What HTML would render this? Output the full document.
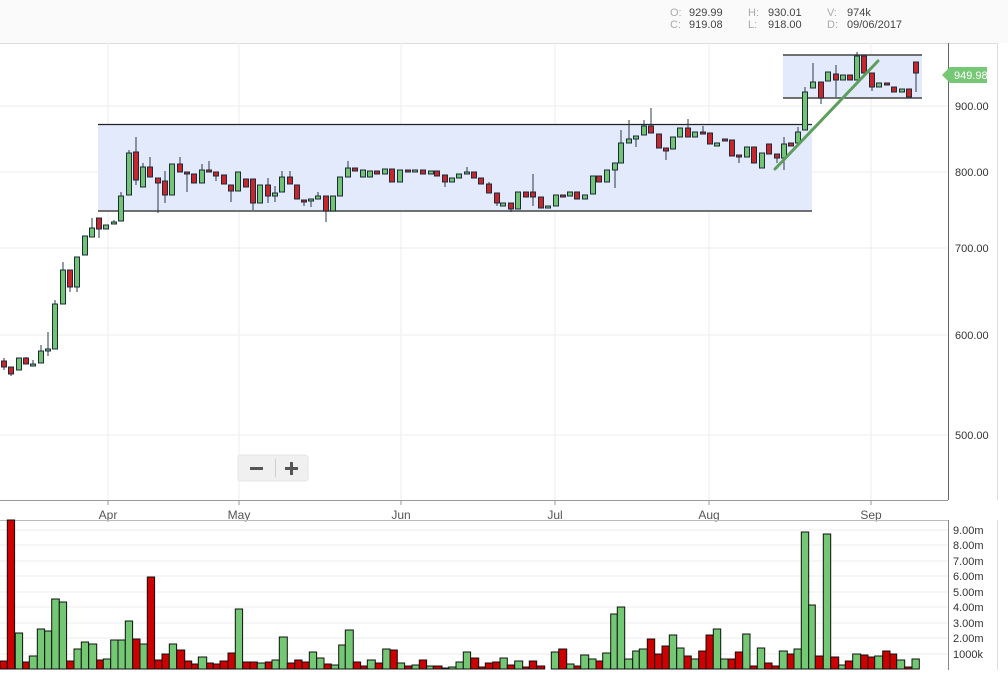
<!DOCTYPE html>
<html><head><meta charset="utf-8"><style>
html,body{margin:0;padding:0;background:#fff;width:1008px;height:673px;overflow:hidden;font-family:"Liberation Sans",Arial,sans-serif}
.hdr{position:absolute;left:0;top:0;width:1008px;height:43px;background:#fafafa}
.t{position:absolute;font-size:11px;color:#444}
.l{color:#aaa}
svg{position:absolute;left:0;top:0}
.g{fill:#72c472;stroke:#1c2b3a;stroke-width:1}
.r{fill:#c8262b;stroke:#1c2b3a;stroke-width:1}
.vg{fill:#74c874;stroke:#111;stroke-width:1}
.vr{fill:#cc0000;stroke:#111;stroke-width:1}
.w line{stroke:#2a3a4a;stroke-width:1}
.ax{font-size:11px;fill:#333}
.mo{font-size:12px;fill:#555}
</style></head><body>
<div class="hdr"></div>
<div class="t l" style="left:670px;top:7px">O:</div><div class="t" style="left:689px;top:7px">929.99</div>
<div class="t l" style="left:670px;top:19px">C:</div><div class="t" style="left:689px;top:19px">919.08</div>
<div class="t l" style="left:748px;top:7px">H:</div><div class="t" style="left:768px;top:7px">930.01</div>
<div class="t l" style="left:748px;top:19px">L:</div><div class="t" style="left:768px;top:19px">918.00</div>
<div class="t l" style="left:827px;top:7px">V:</div><div class="t" style="left:847px;top:7px">974k</div>
<div class="t l" style="left:827px;top:19px">D:</div><div class="t" style="left:847px;top:19px">09/06/2017</div>
<svg width="1008" height="673" viewBox="0 0 1008 673">
<!-- frames -->
<line x1="0" y1="43.5" x2="998" y2="43.5" stroke="#ddd"/>
<line x1="997.5" y1="43" x2="997.5" y2="500" stroke="#ddd"/>
<g stroke="#eee" stroke-width="1">
<line x1="0" y1="106" x2="948" y2="106"/><line x1="0" y1="172" x2="948" y2="172"/>
<line x1="0" y1="248" x2="948" y2="248"/><line x1="0" y1="335" x2="948" y2="335"/>
<line x1="0" y1="435" x2="948" y2="435"/>
<line x1="108" y1="43" x2="108" y2="500"/><line x1="239" y1="43" x2="239" y2="500"/>
<line x1="401" y1="43" x2="401" y2="500"/><line x1="555" y1="43" x2="555" y2="500"/>
<line x1="709" y1="43" x2="709" y2="500"/><line x1="871" y1="43" x2="871" y2="500"/>
<line x1="0" y1="530" x2="948" y2="530"/><line x1="0" y1="545" x2="948" y2="545"/>
<line x1="0" y1="561" x2="948" y2="561"/><line x1="0" y1="576" x2="948" y2="576"/>
<line x1="0" y1="592" x2="948" y2="592"/><line x1="0" y1="607" x2="948" y2="607"/>
<line x1="0" y1="623" x2="948" y2="623"/><line x1="0" y1="638" x2="948" y2="638"/>
<line x1="0" y1="654" x2="948" y2="654"/>
</g>
<!-- rectangles -->
<rect x="98" y="124" width="714" height="87" fill="#e3eafc"/>
<line x1="98" y1="124.5" x2="812" y2="124.5" stroke="#222" stroke-width="1.3"/>
<line x1="98" y1="211" x2="812" y2="211" stroke="#444" stroke-width="1.5"/>
<rect x="783" y="55" width="139" height="43" fill="#e3eafc"/>
<line x1="783" y1="55" x2="922" y2="55" stroke="#444" stroke-width="1.5"/>
<line x1="783" y1="98" x2="922" y2="98" stroke="#444" stroke-width="1.5"/>
<!-- axes -->
<line x1="948.5" y1="43" x2="948.5" y2="500" stroke="#666"/>
<line x1="0" y1="500.5" x2="948" y2="500.5" stroke="#999"/>
<g stroke="#999"><line x1="108" y1="500" x2="108" y2="505"/><line x1="239" y1="500" x2="239" y2="505"/><line x1="401" y1="500" x2="401" y2="505"/><line x1="555" y1="500" x2="555" y2="505"/><line x1="709" y1="500" x2="709" y2="505"/><line x1="871" y1="500" x2="871" y2="505"/></g>
<g class="mo" text-anchor="middle"><text x="108" y="519">Apr</text><text x="239" y="519">May</text><text x="401" y="519">Jun</text><text x="555" y="519">Jul</text><text x="709" y="519">Aug</text><text x="871" y="519">Sep</text></g>
<g class="ax"><text x="955" y="110">900.00</text><text x="955" y="176">800.00</text><text x="955" y="252">700.00</text><text x="955" y="339">600.00</text><text x="955" y="439">500.00</text></g>
<line x1="0" y1="520.5" x2="948" y2="520.5" stroke="#bbb"/>
<line x1="948.5" y1="520" x2="948.5" y2="670" stroke="#888"/>
<line x1="997.5" y1="520" x2="997.5" y2="670" stroke="#ddd"/>
<g class="ax" font-size="10.5"><text x="953" y="534">9.00m</text><text x="953" y="549">8.00m</text><text x="953" y="565">7.00m</text><text x="953" y="580">6.00m</text><text x="953" y="596">5.00m</text><text x="953" y="611">4.00m</text><text x="953" y="627">3.00m</text><text x="953" y="642">2.00m</text><text x="953" y="658">1000k</text></g>
<!-- candles -->
<g class="w">
<line x1="4" y1="358" x2="4" y2="370"/><line x1="11" y1="367" x2="11" y2="376"/><line x1="26" y1="357" x2="26" y2="364"/><line x1="33" y1="360" x2="33" y2="366"/><line x1="41" y1="345" x2="41" y2="363"/><line x1="48" y1="332" x2="48" y2="356"/><line x1="55" y1="300" x2="55" y2="349"/><line x1="63" y1="262" x2="63" y2="304"/><line x1="70" y1="270" x2="70" y2="292"/><line x1="77" y1="257" x2="77" y2="292"/><line x1="92" y1="218" x2="92" y2="237"/><line x1="99" y1="218" x2="99" y2="238"/><line x1="114" y1="220" x2="114" y2="224"/><line x1="121" y1="192" x2="121" y2="221"/><line x1="129" y1="150" x2="129" y2="195"/><line x1="136" y1="137" x2="136" y2="185"/><line x1="143" y1="163" x2="143" y2="187"/><line x1="150" y1="157" x2="150" y2="177"/><line x1="158" y1="178" x2="158" y2="213"/><line x1="165" y1="171" x2="165" y2="203"/><line x1="180" y1="157" x2="180" y2="172"/><line x1="187" y1="172" x2="187" y2="192"/><line x1="202" y1="164" x2="202" y2="183"/><line x1="209" y1="161" x2="209" y2="172"/><line x1="216" y1="172" x2="216" y2="181"/><line x1="231" y1="185" x2="231" y2="202"/><line x1="253" y1="179" x2="253" y2="210"/><line x1="268" y1="178" x2="268" y2="203"/><line x1="275" y1="186" x2="275" y2="202"/><line x1="282" y1="171" x2="282" y2="192"/><line x1="290" y1="171" x2="290" y2="184"/><line x1="304" y1="200" x2="304" y2="206"/><line x1="311" y1="199" x2="311" y2="207"/><line x1="318" y1="192" x2="318" y2="199"/><line x1="326" y1="196" x2="326" y2="222"/><line x1="348" y1="161" x2="348" y2="177"/>
<line x1="445" y1="175" x2="445" y2="187"/><line x1="467" y1="167" x2="467" y2="174"/><line x1="489" y1="182" x2="489" y2="193"/><line x1="497" y1="193" x2="497" y2="206"/><line x1="511" y1="203" x2="511" y2="212"/><line x1="533" y1="174" x2="533" y2="206"/><line x1="615" y1="163" x2="615" y2="188"/><line x1="621" y1="130" x2="621" y2="163"/><line x1="629" y1="120" x2="629" y2="143"/><line x1="636" y1="136" x2="636" y2="147"/><line x1="644" y1="120" x2="644" y2="135"/><line x1="651" y1="108" x2="651" y2="133"/><line x1="666" y1="148" x2="666" y2="160"/><line x1="688" y1="119" x2="688" y2="137"/><line x1="703" y1="126" x2="703" y2="134"/><line x1="739" y1="155" x2="739" y2="163"/><line x1="777" y1="154" x2="777" y2="163"/><line x1="784" y1="137" x2="784" y2="170"/><line x1="798" y1="127" x2="798" y2="143"/><line x1="805" y1="87" x2="805" y2="130"/><line x1="813" y1="63" x2="813" y2="88"/><line x1="821" y1="82" x2="821" y2="104"/><line x1="836" y1="65" x2="836" y2="97"/><line x1="857" y1="52" x2="857" y2="80"/><line x1="872" y1="73" x2="872" y2="91"/><line x1="916" y1="62" x2="916" y2="92"/>
</g>
<g>
<rect class="r" x="1.5" y="361" width="5" height="6"/><rect class="r" x="8.5" y="367" width="5" height="7"/><rect class="g" x="16.5" y="358" width="5" height="12"/><rect class="r" x="23.5" y="358" width="5" height="6"/><rect class="g" x="30.5" y="364" width="5" height="2"/><rect class="g" x="38.5" y="351" width="5" height="12"/><rect class="g" x="45.5" y="349" width="5" height="2"/><rect class="g" x="52.5" y="304" width="5" height="45"/><rect class="g" x="60.5" y="270" width="5" height="34"/><rect class="r" x="67.5" y="270" width="5" height="17"/><rect class="g" x="74.5" y="257" width="5" height="30"/><rect class="g" x="82.5" y="236" width="5" height="19"/><rect class="g" x="89.5" y="228" width="5" height="9"/><rect class="r" x="96.5" y="218" width="5" height="11"/><rect class="g" x="103.5" y="225" width="5" height="4"/><rect class="g" x="111.5" y="222" width="5" height="2"/><rect class="g" x="118.5" y="196" width="5" height="25"/><rect class="g" x="126.5" y="153" width="5" height="42"/><rect class="r" x="133.5" y="152" width="5" height="28"/><rect class="g" x="140.5" y="167" width="5" height="20"/><rect class="r" x="147.5" y="167" width="5" height="10"/><rect class="r" x="155.5" y="178" width="5" height="5"/><rect class="r" x="162.5" y="181" width="5" height="14"/><rect class="g" x="169.5" y="164" width="5" height="31"/><rect class="r" x="177.5" y="164" width="5" height="8"/><rect class="r" x="184.5" y="172" width="5" height="2"/><rect class="r" x="191.5" y="174" width="5" height="9"/><rect class="g" x="199.5" y="170" width="5" height="13"/><rect class="r" x="206.5" y="170" width="5" height="2"/><rect class="r" x="213.5" y="172" width="5" height="4"/><rect class="r" x="221.5" y="175" width="5" height="9"/><rect class="r" x="228.5" y="185" width="5" height="6"/><rect class="g" x="235.5" y="172" width="5" height="19"/><rect class="r" x="243.5" y="179" width="5" height="8"/><rect class="r" x="250.5" y="179" width="5" height="24"/><rect class="g" x="257.5" y="185" width="5" height="18"/><rect class="r" x="265.5" y="185" width="5" height="11"/><rect class="g" x="272.5" y="193" width="5" height="3"/><rect class="g" x="279.5" y="177" width="5" height="15"/><rect class="r" x="287.5" y="177" width="5" height="7"/><rect class="r" x="294.5" y="185" width="5" height="14"/><rect class="r" x="301.5" y="200" width="5" height="2"/><rect class="g" x="308.5" y="199" width="5" height="2"/><rect class="g" x="315.5" y="196" width="5" height="3"/><rect class="r" x="323.5" y="196" width="5" height="15"/><rect class="g" x="330.5" y="196" width="5" height="15"/><rect class="g" x="337.5" y="177" width="5" height="19"/><rect class="g" x="345.5" y="168" width="5" height="9"/><rect class="r" x="352.5" y="168" width="5" height="3"/><rect class="g" x="360.5" y="170" width="5" height="7"/><rect class="g" x="367.5" y="171" width="5" height="6"/><rect class="r" x="374.5" y="171" width="5" height="3"/><rect class="g" x="382.5" y="169" width="5" height="5"/><rect class="r" x="389.5" y="169" width="5" height="13"/>
<rect class="g" x="397.5" y="170" width="5" height="12"/><rect class="r" x="405.5" y="170" width="5" height="2"/><rect class="g" x="412.5" y="170" width="5" height="2"/><rect class="r" x="420.5" y="170" width="5" height="4"/><rect class="g" x="428.5" y="171" width="5" height="3"/><rect class="r" x="434.5" y="171" width="5" height="5"/><rect class="r" x="442.5" y="175" width="5" height="7"/><rect class="g" x="449.5" y="178" width="5" height="4"/><rect class="g" x="456.5" y="174" width="5" height="4"/><rect class="g" x="464.5" y="172" width="5" height="2"/><rect class="r" x="471.5" y="172" width="5" height="6"/><rect class="r" x="478.5" y="178" width="5" height="6"/><rect class="r" x="486.5" y="184" width="5" height="9"/><rect class="r" x="494.5" y="193" width="5" height="10"/><rect class="g" x="500.5" y="203" width="5" height="3"/><rect class="r" x="508.5" y="203" width="5" height="6"/><rect class="g" x="515.5" y="192" width="5" height="17"/><rect class="r" x="523.5" y="192" width="5" height="5"/><rect class="r" x="530.5" y="192" width="5" height="5"/><rect class="r" x="538.5" y="197" width="5" height="11"/><rect class="g" x="545.5" y="206" width="5" height="2"/><rect class="g" x="553.5" y="195" width="5" height="11"/><rect class="r" x="560.5" y="195" width="5" height="2"/><rect class="g" x="567.5" y="192" width="5" height="4"/><rect class="r" x="574.5" y="192" width="5" height="7"/><rect class="g" x="582.5" y="195" width="5" height="4"/><rect class="g" x="590.5" y="176" width="5" height="18"/><rect class="r" x="596.5" y="176" width="5" height="6"/><rect class="g" x="604.5" y="170" width="5" height="12"/><rect class="g" x="612.5" y="163" width="5" height="7"/><rect class="g" x="618.5" y="143" width="5" height="20"/><rect class="g" x="626.5" y="139" width="5" height="4"/><rect class="g" x="633.5" y="136" width="5" height="3"/><rect class="g" x="641.5" y="126" width="5" height="9"/><rect class="r" x="648.5" y="126" width="5" height="7"/><rect class="r" x="656.5" y="134" width="5" height="14"/><rect class="r" x="663.5" y="148" width="5" height="3"/><rect class="g" x="670.5" y="137" width="5" height="12"/><rect class="g" x="677.5" y="128" width="5" height="9"/><rect class="r" x="685.5" y="128" width="5" height="9"/><rect class="g" x="692.5" y="132" width="5" height="5"/><rect class="r" x="700.5" y="132" width="5" height="2"/><rect class="r" x="707.5" y="133" width="5" height="11"/><rect class="g" x="714.5" y="143" width="5" height="3"/><rect class="r" x="722.5" y="139" width="5" height="2"/><rect class="r" x="729.5" y="140" width="5" height="16"/><rect class="r" x="736.5" y="155" width="5" height="2"/><rect class="g" x="744.5" y="147" width="5" height="10"/><rect class="r" x="751.5" y="147" width="5" height="16"/><rect class="g" x="759.5" y="153" width="5" height="15"/><rect class="r" x="766.5" y="144" width="5" height="10"/><rect class="r" x="774.5" y="154" width="5" height="4"/><rect class="g" x="781.5" y="144" width="5" height="14"/><rect class="r" x="788.5" y="143" width="5" height="3"/><rect class="g" x="795.5" y="132" width="5" height="11"/><rect class="g" x="802.5" y="92" width="5" height="38"/><rect class="g" x="810.5" y="82" width="5" height="6"/><rect class="r" x="818.5" y="82" width="5" height="16"/><rect class="g" x="825.5" y="72" width="5" height="9"/><rect class="r" x="833.5" y="74" width="5" height="6"/><rect class="g" x="840.5" y="75" width="5" height="5"/><rect class="r" x="847.5" y="75" width="5" height="5"/><rect class="g" x="854.5" y="56" width="5" height="24"/><rect class="r" x="861.5" y="56" width="5" height="17"/><rect class="r" x="869.5" y="73" width="5" height="14"/><rect class="g" x="876.5" y="83" width="5" height="4"/><rect class="r" x="884.5" y="83" width="5" height="2"/><rect class="r" x="891.5" y="87" width="5" height="5"/><rect class="g" x="899.5" y="89" width="5" height="3"/><rect class="r" x="906.5" y="89" width="5" height="8"/><rect class="r" x="913.5" y="62" width="5" height="11"/>
</g>
<line x1="775" y1="169" x2="878" y2="61" stroke="#5d9e5d" stroke-width="3" stroke-linecap="round"/>
<!-- price tag -->
<path d="M942 75 L950 67 L987 67 L987 83 L950 83 Z" fill="#76c776"/>
<text x="954" y="79" font-size="11" fill="#fff">949.98</text>
<!-- zoom control -->
<rect x="238" y="455" width="70" height="26" rx="3" fill="#f0f0f0" stroke="#e4e4e4"/>
<line x1="275.5" y1="459" x2="275.5" y2="477" stroke="#ccc"/>
<rect x="250" y="467" width="13" height="3" fill="#555"/>
<rect x="285" y="467" width="13" height="3" fill="#555"/><rect x="290" y="462" width="3" height="13" fill="#555"/>
<!-- volume -->
<g>
<rect class="vr" x="0" y="661" width="7.3" height="8"/><rect class="vr" x="7.3" y="520" width="7.3" height="149"/><rect class="vg" x="15.3" y="633" width="7.3" height="36"/><rect class="vr" x="22.7" y="662" width="6.6" height="7"/><rect class="vg" x="29.3" y="656" width="8" height="13"/><rect class="vg" x="37.3" y="629" width="7.3" height="40"/><rect class="vg" x="44.7" y="631" width="7" height="38"/><rect class="vg" x="51.7" y="599" width="7.6" height="70"/><rect class="vg" x="59.3" y="602" width="7.3" height="67"/><rect class="vr" x="66.7" y="661" width="7.3" height="8"/><rect class="vg" x="74" y="649" width="7.3" height="20"/><rect class="vg" x="81.3" y="642" width="7.3" height="27"/><rect class="vg" x="88.7" y="644" width="8" height="25"/><rect class="vr" x="96.7" y="660" width="6.6" height="9"/><rect class="vg" x="103.3" y="659" width="7.3" height="10"/><rect class="vg" x="110.7" y="640" width="7.3" height="29"/><rect class="vg" x="118" y="640" width="7.3" height="29"/><rect class="vg" x="125.3" y="621" width="7.3" height="48"/><rect class="vr" x="132.7" y="639" width="7.3" height="30"/><rect class="vg" x="140" y="644" width="7.3" height="25"/><rect class="vr" x="147.3" y="577" width="7.3" height="92"/><rect class="vr" x="154.7" y="660" width="7.3" height="9"/><rect class="vr" x="162" y="654" width="7.3" height="15"/><rect class="vg" x="169.3" y="644" width="7.3" height="25"/><rect class="vr" x="176.7" y="650" width="8" height="19"/><rect class="vr" x="184.7" y="661" width="7" height="8"/><rect class="vr" x="191.7" y="664" width="6.6" height="5"/><rect class="vg" x="198.3" y="657" width="8.4" height="12"/><rect class="vr" x="206.7" y="663" width="6.6" height="6"/><rect class="vr" x="213.3" y="664" width="6.7" height="5"/><rect class="vr" x="220" y="661" width="8" height="8"/><rect class="vr" x="228" y="653" width="7.3" height="16"/><rect class="vg" x="235.3" y="609" width="7.3" height="60"/><rect class="vr" x="242.7" y="662" width="7.3" height="7"/><rect class="vr" x="250" y="662" width="7.3" height="7"/><rect class="vg" x="257.3" y="663" width="8" height="6"/><rect class="vr" x="265.3" y="662" width="6.7" height="7"/><rect class="vg" x="272" y="660" width="7.3" height="9"/><rect class="vg" x="279.3" y="637" width="8" height="32"/><rect class="vr" x="287.3" y="663" width="7.3" height="6"/><rect class="vr" x="294.7" y="660" width="7.3" height="9"/><rect class="vr" x="302" y="662" width="7.3" height="7"/><rect class="vg" x="309.3" y="652" width="7.3" height="17"/><rect class="vg" x="316.7" y="658" width="7.3" height="11"/><rect class="vr" x="324" y="664" width="7.3" height="5"/><rect class="vg" x="331.3" y="665" width="7.3" height="4"/><rect class="vg" x="338.7" y="645" width="6.6" height="24"/><rect class="vg" x="345.3" y="630" width="8" height="39"/><rect class="vr" x="353.3" y="662" width="7.3" height="7"/><rect class="vr" x="360.7" y="666" width="6.6" height="3"/><rect class="vg" x="367.3" y="660" width="8" height="9"/><rect class="vr" x="375.3" y="663" width="7.3" height="6"/><rect class="vg" x="382.7" y="649" width="7.3" height="20"/><rect class="vr" x="390" y="650" width="7.3" height="19"/><rect class="vg" x="397.3" y="663" width="7.3" height="6"/><rect class="vr" x="404.7" y="666" width="7.3" height="3"/><rect class="vg" x="412" y="665" width="7.3" height="4"/><rect class="vr" x="419.3" y="660" width="7.3" height="9"/><rect class="vg" x="426.7" y="666" width="6.6" height="3"/><rect class="vr" x="433.3" y="666" width="8.7" height="3"/><rect class="vg" x="442" y="668" width="6.7" height="1"/><rect class="vg" x="448.7" y="667" width="7.3" height="2"/><rect class="vg" x="456" y="662" width="7.3" height="7"/><rect class="vg" x="463.3" y="652" width="7.3" height="17"/><rect class="vr" x="470.7" y="658" width="8" height="11"/><rect class="vr" x="478.7" y="667" width="6.6" height="2"/><rect class="vr" x="485.3" y="663" width="7.3" height="6"/><rect class="vr" x="492.7" y="662" width="7.3" height="7"/>
<rect class="vg" x="500" y="658" width="7.3" height="11"/><rect class="vr" x="507.3" y="665" width="7.3" height="4"/><rect class="vg" x="514.7" y="661" width="8" height="8"/><rect class="vr" x="522.7" y="667" width="6.6" height="2"/><rect class="vr" x="529.3" y="661" width="7.4" height="8"/><rect class="vr" x="536.7" y="666" width="8" height="3"/><rect class="vg" x="551.3" y="652" width="7.4" height="17"/><rect class="vr" x="558.7" y="649" width="8" height="20"/><rect class="vg" x="566.7" y="664" width="7.3" height="5"/><rect class="vr" x="574" y="666" width="6.7" height="3"/><rect class="vg" x="580.7" y="655" width="8" height="14"/><rect class="vg" x="588.7" y="659" width="7.3" height="10"/><rect class="vr" x="596" y="661" width="6.7" height="8"/><rect class="vg" x="602.7" y="653" width="8" height="16"/><rect class="vg" x="610.7" y="614" width="6.6" height="55"/><rect class="vg" x="617.3" y="607" width="7.4" height="62"/><rect class="vg" x="624.7" y="659" width="8" height="10"/><rect class="vg" x="632.7" y="651" width="6.6" height="18"/><rect class="vg" x="639.3" y="649" width="8" height="20"/><rect class="vr" x="647.3" y="639" width="7.4" height="30"/><rect class="vr" x="654.7" y="654" width="7.3" height="15"/><rect class="vr" x="662" y="646" width="7.3" height="23"/><rect class="vg" x="669.3" y="635" width="7.4" height="34"/><rect class="vg" x="676.7" y="648" width="7.3" height="21"/><rect class="vr" x="684" y="656" width="7.3" height="13"/><rect class="vg" x="691.3" y="659" width="7.4" height="10"/><rect class="vr" x="698.7" y="651" width="7.3" height="18"/><rect class="vr" x="706" y="635" width="7.3" height="34"/><rect class="vg" x="713.3" y="629" width="7.4" height="40"/><rect class="vg" x="720.7" y="659" width="7.3" height="10"/><rect class="vr" x="728" y="659" width="7.3" height="10"/><rect class="vr" x="735.3" y="652" width="7.4" height="17"/><rect class="vg" x="742.7" y="634" width="7.3" height="35"/><rect class="vr" x="750" y="666" width="7.3" height="3"/><rect class="vg" x="757.3" y="648" width="7.4" height="21"/><rect class="vr" x="764.7" y="663" width="7.3" height="6"/><rect class="vr" x="772" y="666" width="7.3" height="3"/><rect class="vg" x="779.3" y="651" width="8" height="18"/><rect class="vr" x="787.3" y="654" width="6.7" height="15"/><rect class="vg" x="794" y="649" width="7.3" height="20"/><rect class="vg" x="801.3" y="532" width="7.4" height="137"/><rect class="vg" x="808.7" y="605" width="6.6" height="64"/><rect class="vr" x="815.3" y="656" width="8" height="13"/><rect class="vg" x="823.3" y="534" width="7.4" height="135"/><rect class="vr" x="830.7" y="657" width="8" height="12"/><rect class="vg" x="838.7" y="665" width="6.6" height="4"/><rect class="vr" x="845.3" y="661" width="7.4" height="8"/><rect class="vg" x="852.7" y="654" width="8" height="15"/><rect class="vr" x="860.7" y="655" width="7.3" height="14"/><rect class="vr" x="868" y="657" width="6.7" height="12"/><rect class="vg" x="874.7" y="656" width="8" height="13"/><rect class="vr" x="882.7" y="651" width="7.3" height="18"/><rect class="vr" x="890" y="654" width="6.7" height="15"/><rect class="vg" x="896.7" y="660" width="8" height="9"/><rect class="vr" x="904.7" y="667" width="7.3" height="2"/><rect class="vg" x="912" y="659" width="7.3" height="10"/>
</g>
</svg>
</body></html>
